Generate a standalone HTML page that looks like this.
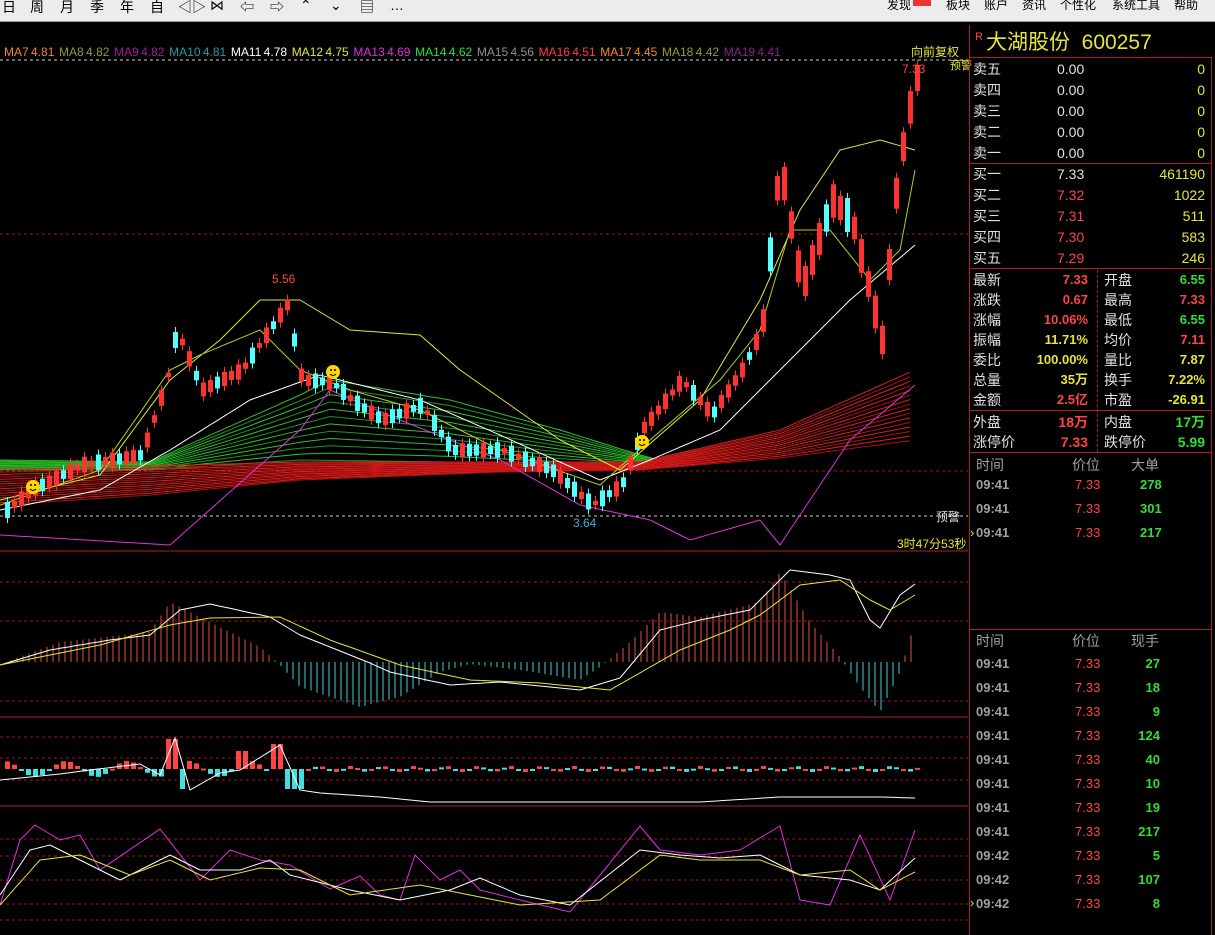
<!DOCTYPE html>
<html><head><meta charset="utf-8"><style>
*{margin:0;padding:0;box-sizing:border-box}
body{width:1215px;height:935px;background:#000;overflow:hidden;position:relative;font-family:"Liberation Sans","Noto Sans CJK SC",sans-serif;}
#tb{position:absolute;left:0;top:0;width:1215px;height:22px;background:#ececec;border-bottom:1px solid #999;font-size:14px;color:#000}
#tb span{position:absolute;top:-3px}
.t{position:absolute;white-space:nowrap;font-size:14px;line-height:16px}
.w{color:#e0e0e0}.r{color:#ff4444}.y{color:#e6e63a}.g{color:#33dd33}.gr{color:#a0a0a0}
.rt{text-align:right}
.hl{position:absolute;height:1px;background:#b02020}
.vl{position:absolute;width:1px;background:#b02020}
</style></head><body>
<div id="tb">
<span style="left:2px">日</span><span style="left:30px">周</span><span style="left:60px">月</span><span style="left:90px">季</span><span style="left:120px">年</span><span style="left:150px">自</span><span style="left:178px">◁▷</span><span style="left:210px">⋈</span><span style="left:240px">⇦</span><span style="left:270px">⇨</span><span style="left:300px">⌃</span><span style="left:330px">⌄</span><span style="left:360px">▤</span><span style="left:390px">…</span>
<span style="left:887px;font-size:12px;top:-4px">发现</span><div style="position:absolute;left:913px;top:0;width:18px;height:6px;background:#e33"></div>
<span style="left:946px;font-size:12px;top:-4px">板块</span><span style="left:984px;font-size:12px;top:-4px">账户</span><span style="left:1022px;font-size:12px;top:-4px">资讯</span><span style="left:1060px;font-size:12px;top:-4px">个性化</span><span style="left:1112px;font-size:12px;top:-4px">系统工具</span><span style="left:1174px;font-size:12px;top:-4px">帮助</span>
</div>
<svg id="ch" width="970" height="935" style="position:absolute;left:0;top:0"></svg>
<div class="t" style="left:4px;top:44px;font-size:12px;word-spacing:-1px">
<span style="color:#f08a2a">MA7 4.81</span>&nbsp; <span style="color:#9a9a30">MA8 4.82</span>&nbsp; <span style="color:#a0209a">MA9 4.82</span>&nbsp; <span style="color:#2a9aa0">MA10 4.81</span>&nbsp; <span style="color:#fff">MA11 4.78</span>&nbsp; <span style="color:#e6e63a">MA12 4.75</span>&nbsp; <span style="color:#e030e0">MA13 4.69</span>&nbsp; <span style="color:#30e030">MA14 4.62</span>&nbsp; <span style="color:#909090">MA15 4.56</span>&nbsp; <span style="color:#ff4040">MA16 4.51</span>&nbsp; <span style="color:#f08a2a">MA17 4.45</span>&nbsp; <span style="color:#9a9a30">MA18 4.42</span>&nbsp; <span style="color:#8a208a">MA19 4.41</span></div>
<div class="t y" style="left:911px;top:44px;font-size:12px">向前复权</div>
<div class="t y" style="left:950px;top:58px;font-size:11px">预警</div>
<div class="t r" style="left:902px;top:61px;font-size:12px">7.33</div>
<div class="t r" style="left:272px;top:271px;font-size:12px">5.56</div>
<div class="t" style="left:573px;top:515px;font-size:12px;color:#4ad">3.64</div>
<div class="t w" style="left:936px;top:509px;font-size:12px">预警</div>
<div class="t y" style="left:897px;top:536px;font-size:12px">3时47分53秒</div>
<div class="vl" style="left:969px;top:25px;height:910px"></div>
<div class="vl" style="left:1211px;top:57px;height:878px"></div>
<div class="t r" style="left:975px;top:29px;font-size:11px">R</div>
<div class="t y" style="left:986px;top:31px;font-size:21px;line-height:24px">大湖股份&nbsp; 600257</div>
<div class="hl" style="left:969px;top:57px;width:243px"></div>
<div class="hl" style="left:969px;top:163px;width:243px"></div>
<div class="hl" style="left:969px;top:268px;width:243px"></div>
<div class="hl" style="left:969px;top:410px;width:243px"></div>
<div class="hl" style="left:969px;top:452px;width:243px"></div>
<div class="hl" style="left:969px;top:629px;width:243px"></div>
<div style="position:absolute;left:1097px;top:270px;height:182px;border-left:1px dashed #b02020"></div>
<div id="rp"></div>
<script>
var h='';
function T(x,y,c,s,ex){h+='<div class="t '+c+'" style="left:'+x+'px;top:'+y+'px;'+(ex||'')+'">'+s+'</div>';}
var sells=['卖五','卖四','卖三','卖二','卖一'];
sells.forEach(function(s,i){var y=61+i*21;T(973,y,'w',s);T(1057,y,'w','0.00');T(1150,y,'y rt','0',"width:55px");});
var buys=[['买一','7.33','461190','w'],['买二','7.32','1022','r'],['买三','7.31','511','r'],['买四','7.30','583','r'],['买五','7.29','246','r']];
buys.forEach(function(b,i){var y=166+i*21;T(973,y,'w',b[0]);T(1057,y,b[3],b[1]);T(1120,y,'y rt',b[2],"width:85px");});
var st=[['最新','7.33','r','开盘','6.55','g'],['涨跌','0.67','r','最高','7.33','r'],['涨幅','10.06%','r','最低','6.55','g'],['振幅','11.71%','y','均价','7.11','r'],['委比','100.00%','y','量比','7.87','y'],['总量','35万','y','换手','7.22%','y'],['金额','2.5亿','r','市盈','-26.91','y']];
st.forEach(function(s,i){var y=272+i*20;T(973,y,'w',s[0]);T(1010,y,s[2]+' rt',s[1],'width:78px;font-size:13px;font-weight:bold');T(1104,y,'w',s[3]);T(1130,y,s[5]+' rt',s[4],'width:75px;font-size:13px;font-weight:bold');});
T(973,414,'w','外盘');T(1010,414,'r rt','18万','width:78px;font-weight:bold');T(1104,414,'w','内盘');T(1130,414,'g rt','17万','width:75px;font-weight:bold');
T(973,434,'w','涨停价');T(1010,434,'r rt','7.33','width:78px;font-weight:bold');T(1104,434,'w','跌停价');T(1130,434,'g rt','5.99','width:75px;font-weight:bold');
T(976,457,'gr','时间');T(1072,457,'gr','价位');T(1131,457,'gr','大单');
[['278'],['301'],['217']].forEach(function(v,i){var y=477+i*24;T(976,y,'gr','09:41','font-weight:bold;font-size:13px');T(1075,y,'r','7.33','font-size:13px');T(1140,y,'g',v[0],'font-weight:bold;font-size:13px');});
T(970,525,'y','›','font-size:13px');
T(976,633,'gr','时间');T(1072,633,'gr','价位');T(1131,633,'gr','现手');
var vs=['27','18','9','124','40','10','19','217','5','107','8'];
vs.forEach(function(v,i){var y=656+i*24;T(976,y,'gr',i>7?'09:42':'09:41','font-weight:bold;font-size:13px');T(1075,y,'r','7.33','font-size:13px');T(1110,y,'g rt',v,'width:50px;font-weight:bold;font-size:13px');});
T(970,895,'y','›','font-size:13px');
document.getElementById('rp').innerHTML=h;

var s='';
function L(x1,y1,x2,y2,c,d){s+='<line x1="'+x1+'" y1="'+y1+'" x2="'+x2+'" y2="'+y2+'" stroke="'+c+'"'+(d?' stroke-dasharray="3,3"':'')+'/>';}
function P(pts,c,w){s+='<polyline fill="none" stroke="'+c+'" stroke-width="'+(w||1)+'" points="'+pts.map(function(p){return p[0].toFixed(1)+','+p[1].toFixed(1)}).join(' ')+'"/>';}
function interp(k,x){for(var i=0;i<k.length-1;i++){if(x<=k[i+1][0]){var t=(x-k[i][0])/(k[i+1][0]-k[i][0]);return k[i][1]+t*(k[i+1][1]-k[i][1]);}}return k[k.length-1][1];}
L(0,60,968,60,'#ccc',1);L(0,234,968,234,'#a01818',1);L(0,471,968,471,'#a01818',1);L(0,516,968,516,'#ccc',1);
[582,621,701].forEach(function(y){L(0,y,968,y,'#a01818',1)});
[737,758,780].forEach(function(y){L(0,y,968,y,'#a01818',1)});
[839,856,880,904,920].forEach(function(y){L(0,y,968,y,'#a01818',1)});
L(0,551,968,551,'#b02020');L(0,717,968,717,'#b02020');L(0,806,968,806,'#b02020');
var K=[[5,510],[30,490],[80,465],[140,455],[165,380],[175,330],[200,390],[240,370],[285,305],[300,380],[330,382],[350,400],[380,420],[420,405],[450,450],[500,450],[550,470],[590,505],[620,485],[640,430],[680,380],[710,415],[740,370],[760,330],[778,160],[800,290],[830,200],[850,220],[870,300],[880,340],[893,200],[905,120],[915,78]];
var gTop=[[0,460],[150,462],[300,395],[330,380],[450,400],[560,430],[640,455],[660,460]];
var gBot=[[0,470],[150,470],[300,460],[450,462],[560,465],[640,465],[660,462]];
for(var j=0;j<12;j++){var t=j/11,pts=[];for(var x=0;x<=660;x+=10){pts.push([x,interp(gTop,x)*(1-t)+interp(gBot,x)*t]);}P(pts,j%2?'#1a9a1a':'#30c030',1);}
var rTop=[[0,470],[300,462],[640,462],[780,430],[915,370]];
var rBot=[[0,505],[150,495],[300,480],[500,472],[640,470],[780,458],[915,440]];
for(var j=0;j<16;j++){var t=j/15,pts=[];for(var x=0;x<=915;x+=10){pts.push([x,interp(rTop,x)*(1-t)+interp(rBot,x)*t]);}P(pts,j%2?'#b01010':'#e02020',1);}
var ma=function(k,c){var pts=[];for(var x=0;x<=915;x+=5)pts.push([x,interp(k,x)]);P(pts,c,1);};
ma([[0,510],[100,490],[170,450],[250,400],[320,375],[420,400],[500,435],[600,480],[650,460],[720,430],[780,370],[850,300],[915,245]],'#fff');
ma([[0,535],[170,545],[300,430],[330,390],[400,420],[500,460],[580,505],[650,520],[690,540],[760,520],[780,545],[850,440],[915,385]],'#e030e0');
ma([[0,500],[100,475],[170,380],[220,340],[260,300],[300,300],[350,330],[420,335],[460,370],[560,440],[620,470],[700,400],[760,300],[800,210],[840,150],[880,140],[915,150]],'#e6e63a');
ma([[0,505],[100,470],[170,370],[200,355],[260,330],[300,370],[350,390],[420,410],[500,450],[600,485],[650,440],[720,380],[760,330],[790,230],[830,230],[870,280],[900,250],[915,170]],'#b0d020');
var n=0;for(var x=5;x<=915;x+=7){n++;var c=interp(K,x);var up;
if(x<300)up=Math.sin(n*2.3)<0.7;else if(x<625)up=Math.sin(n*2.3)>0.5;else up=Math.sin(n*2.3)<0.8||x>895;
var bh=4+Math.abs(Math.sin(n*1.7))*12+(x>760?18:0);var y1=c-bh*0.5;var col=up?'#ff3232':'#54ffff';
s+='<line x1="'+(x+2.5)+'" y1="'+(y1-5)+'" x2="'+(x+2.5)+'" y2="'+(y1+bh+5)+'" stroke="'+col+'"/>';
s+='<rect x="'+x+'" y="'+y1+'" width="5" height="'+bh+'" fill="'+col+'"/>';}
[[33,487],[333,372],[642,442]].forEach(function(p){s+='<circle cx="'+p[0]+'" cy="'+p[1]+'" r="7" fill="#ffd800"/><circle cx="'+(p[0]-2)+'" cy="'+(p[1]-2)+'" r="1" fill="#000"/><circle cx="'+(p[0]+2)+'" cy="'+(p[1]-2)+'" r="1" fill="#000"/><path d="M'+(p[0]-3)+' '+(p[1]+2)+' q3 3 6 0" stroke="#000" fill="none"/>';});
var z=662;
for(var x=5;x<=915;x+=6){var v=interp([[0,2],[60,-20],[150,-30],[170,-60],[200,-45],[260,-15],[280,3],[300,25],[360,45],[400,35],[440,10],[470,2],[520,8],[580,18],[600,5],[630,-20],[660,-50],[700,-45],[760,-60],[780,-90],[810,-40],[840,-5],[860,25],[880,50],[900,10],[915,-40]],x);var c=v<0?'#e05040':'#40d0d0';L(x,z,x,z+v,c);}
ma([[0,665],[50,650],[110,640],[150,635],[180,610],[210,604],[270,617],[300,635],[370,663],[390,672],[450,685],[500,682],[580,690],[620,678],[660,630],[700,620],[750,610],[770,590],[790,570],[830,575],[850,580],[870,620],[880,628],[900,595],[915,584]],'#fff');
ma([[0,665],[100,645],[170,625],[210,618],[280,617],[330,640],[400,665],[470,680],[540,683],[610,690],[680,650],[730,630],[760,615],[800,585],[840,580],[870,600],[890,610],[915,595]],'#e6e63a');
for(var x=5;x<=915;x+=7){var v=Math.sin(x*0.7)*3;if(x>165&&x<185)v=x<175?-30:20;if(x>270&&x<300)v=x<285?-25:20;if(x>235&&x<250)v=-18;if(x<300&&Math.abs(v)<4)v=Math.sin(x)*8;var c=v<0?'#ff4444':'#40e0e0';if(x>300&&Math.abs(v)<4)c=Math.sin(x*1.3)>0?'#ff4444':'#40e0e0';s+='<rect x="'+x+'" y="'+Math.min(769,769+v)+'" width="5" height="'+Math.max(2,Math.abs(v))+'" fill="'+c+'"/>';}
ma([[0,780],[60,774],[90,770],[140,764],[160,775],[175,738],[190,790],[220,773],[240,770],[280,745],[300,790],[320,793],[380,797],[430,802],[550,802],[700,802],[780,797],[880,797],[915,798]],'#fff');
ma([[0,905],[20,840],[35,825],[60,840],[80,835],[100,870],[160,829],[200,880],[230,850],[260,860],[290,865],[330,889],[360,876],[380,895],[400,900],[415,855],[440,880],[460,870],[480,890],[520,900],[570,912],[640,826],[660,850],[700,855],[740,850],[780,826],[800,900],[830,905],[860,835],[890,900],[915,830]],'#e030e0');
ma([[0,895],[30,850],[50,845],[80,860],[120,880],[170,855],[200,870],[240,870],[270,860],[290,875],[350,890],[400,900],[450,890],[480,878],[520,895],[570,905],[640,850],[680,855],[720,858],[760,855],[780,865],[800,875],[850,880],[880,890],[915,858]],'#fff');
ma([[0,905],[40,860],[80,855],[130,875],[170,860],[210,880],[260,868],[300,870],[350,895],[420,885],[470,895],[520,905],[600,900],[660,855],[700,860],[760,860],[800,875],[850,870],[880,890],[915,872]],'#e6e63a');
document.getElementById('ch').innerHTML=s;
</script>
</body></html>
